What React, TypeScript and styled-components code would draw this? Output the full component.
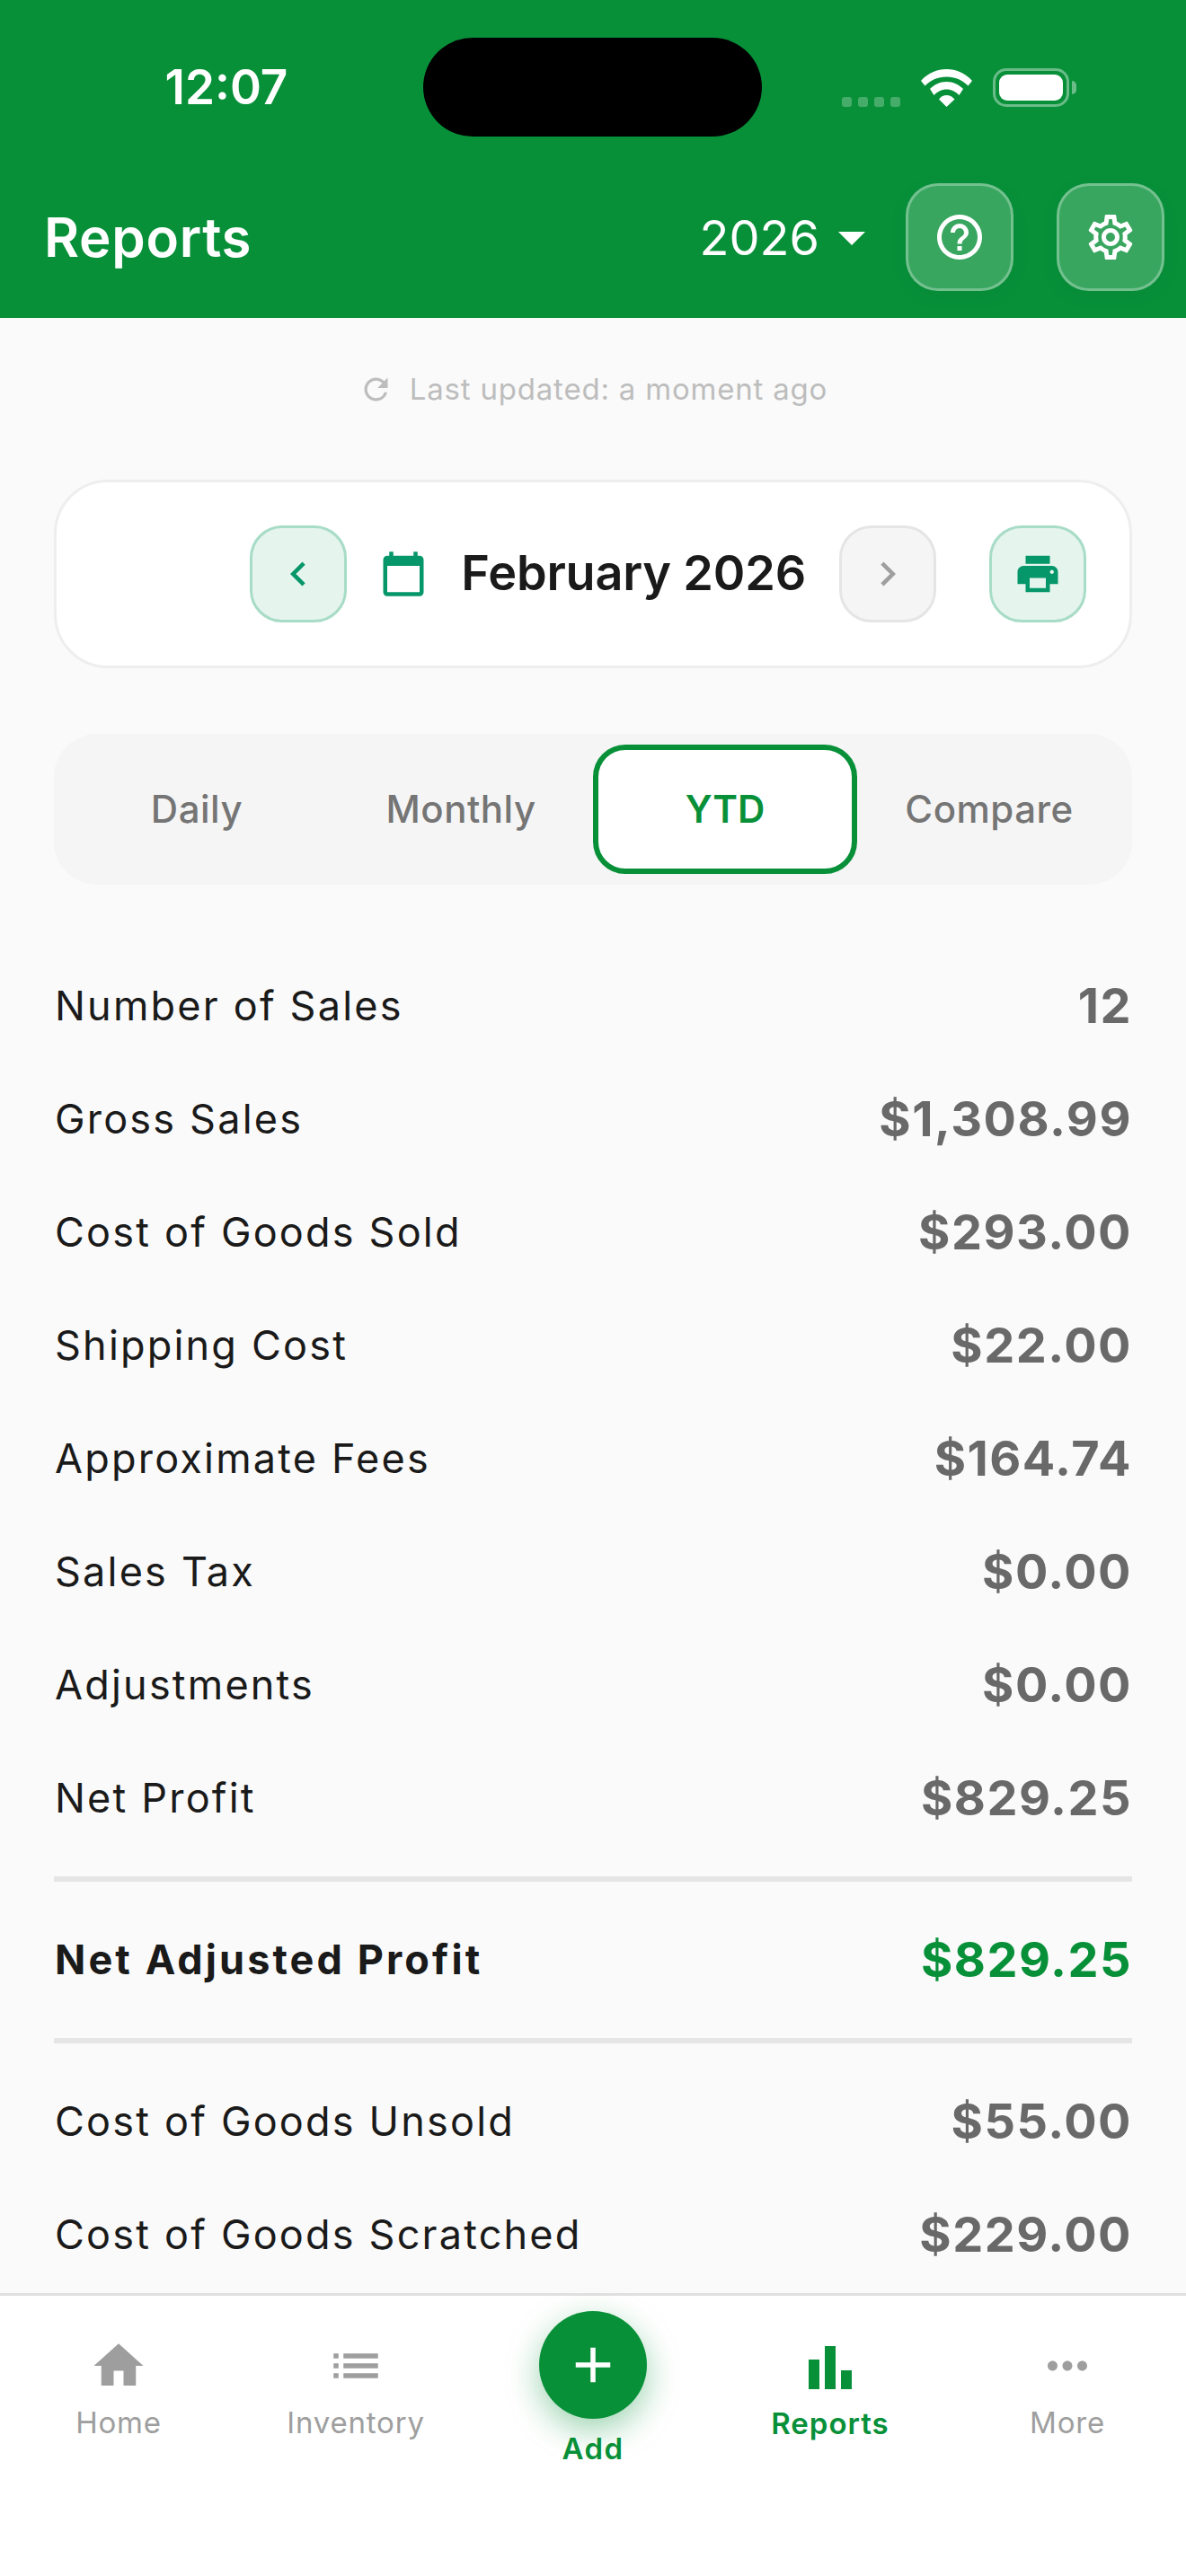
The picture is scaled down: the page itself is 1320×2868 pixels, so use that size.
import { createGlobalStyle, styled } from 'styled-components';
import {
  MdAdd,
  MdArrowDropDown,
  MdBarChart,
  MdCalendarToday,
  MdChevronLeft,
  MdChevronRight,
  MdHelpOutline,
  MdHome,
  MdList,
  MdMoreHoriz,
  MdOutlineSettings,
  MdPrint,
  MdRefresh,
} from 'react-icons/md';

const GREEN = '#089039';
const TEAL = '#059669';

const GlobalStyle = createGlobalStyle`
  html, body {
    margin: 0;
    padding: 0;
    background: #fafafa;
  }
  * {
    box-sizing: border-box;
  }
  body {
    font-family: Inter, "Liberation Sans", sans-serif;
  }
`;

const Screen = styled.div`
  width: 1320px;
  height: 2868px;
  display: flex;
  flex-direction: column;
  overflow: hidden;
  background: #fafafa;
`;

const Header = styled.header`
  background: ${GREEN};
  height: 354px;
  flex: none;
  display: flex;
  flex-direction: column;
`;

const StatusBar = styled.div`
  display: grid;
  grid-template-columns: 471px 377px 1fr;
  align-items: center;
  padding-top: 42px;
`;

const Time = styled.div`
  color: #fff;
  font-size: 53px;
  font-weight: 600;
  text-align: center;
  padding-left: 33px;
`;

const Island = styled.div`
  height: 110px;
  background: #000;
  border-radius: 55px;
`;

const StatusIcons = styled.div`
  display: flex;
  align-items: flex-end;
  height: 43px;
  padding-left: 89px;
`;

const SignalDots = styled.div`
  display: flex;
  gap: 7px;
  margin-right: 23px;
`;

const SignalDot = styled.span`
  width: 11px;
  height: 11px;
  border-radius: 3px;
  background: rgba(255, 255, 255, 0.25);
`;

const Battery = styled.div`
  position: relative;
  width: 85px;
  height: 43px;
  margin-left: 23px;
  padding: 4px;
  border: 3px solid rgba(255, 255, 255, 0.4);
  border-radius: 15px;
`;

const BatteryFill = styled.div`
  height: 100%;
  background: #fff;
  border-radius: 9px;
`;

const BatteryTip = styled.div`
  position: absolute;
  right: -11px;
  top: 11px;
  width: 5px;
  height: 15px;
  background: rgba(255, 255, 255, 0.4);
  border-radius: 0 5px 5px 0;
`;

const TitleRow = styled.div`
  display: flex;
  align-items: center;
  margin-top: 52px;
  padding: 0 24px 0 49px;
`;

const Title = styled.h1`
  flex: 1;
  margin: 0;
  color: #fff;
  font-size: 60px;
  font-weight: 600;
  letter-spacing: 0.7px;
`;

const YearPicker = styled.div`
  display: flex;
  align-items: center;
  color: #fff;
  font-size: 54px;
  font-weight: 400;
  margin-right: 24px;
`;

const HeaderButton = styled.button`
  width: 120px;
  height: 120px;
  padding: 0;
  display: flex;
  align-items: center;
  justify-content: center;
  color: #fff;
  background: rgba(255, 255, 255, 0.2);
  border: 3px solid rgba(255, 255, 255, 0.3);
  border-radius: 36px;
  box-shadow: 0 6px 24px rgba(0, 0, 0, 0.04);

  & + & {
    margin-left: 48px;
  }
`;

const Content = styled.main`
  flex: 1;
  min-height: 0;
  overflow: hidden;
  padding: 0 60px;
`;

const Updated = styled.div`
  display: flex;
  align-items: center;
  justify-content: center;
  gap: 18px;
  height: 158px;
  color: #bdbdbd;
  font-size: 33px;
  letter-spacing: 0.8px;
`;

const DateCard = styled.section`
  height: 210px;
  display: flex;
  align-items: center;
  justify-content: flex-end;
  padding: 0 48px;
  margin-top: 22px;
  background: #fff;
  border: 3px solid #eeeeee;
  border-radius: 60px;
`;

const NavButton = styled.button<{ $active?: boolean }>`
  width: 108px;
  height: 108px;
  padding: 0;
  flex: none;
  display: flex;
  align-items: center;
  justify-content: center;
  color: ${({ $active }) => ($active ? TEAL : '#9e9e9e')};
  background: ${({ $active }) => ($active ? '#e6f4ee' : '#f5f5f5')};
  border: 3px solid ${({ $active }) => ($active ? '#a7dcc6' : '#e5e5e5')};
  border-radius: 36px;
`;

const DateLabel = styled.div`
  display: flex;
  align-items: center;
  gap: 37px;
  margin: 0 37px 0 36px;
  color: #1a1a1a;
  font-size: 54px;
  font-weight: 600;
  letter-spacing: -0.2px;
  line-height: 62px;
  padding-bottom: 2px;
  white-space: nowrap;

  svg {
    color: ${TEAL};
    flex: none;
    margin-top: 2px;
  }
`;

const PrintSpacer = styled.div`
  width: 59px;
  flex: none;
`;

const Tabs = styled.div`
  height: 168px;
  display: grid;
  grid-template-columns: repeat(4, 1fr);
  padding: 12px;
  margin-top: 73px;
  background: #f5f5f5;
  border-radius: 48px;
`;

const Tab = styled.div<{ $selected?: boolean }>`
  display: flex;
  align-items: center;
  justify-content: center;
  padding-bottom: 2px;
  color: ${({ $selected }) => ($selected ? GREEN : '#757575')};
  font-size: 42px;
  font-weight: ${({ $selected }) => ($selected ? 600 : 500)};
  letter-spacing: ${({ $selected }) => ($selected ? 0 : 0.5)}px;
  background: ${({ $selected }) => ($selected ? '#fff' : 'transparent')};
  border: 6px solid ${({ $selected }) => ($selected ? GREEN : 'transparent')};
  border-radius: 36px;
`;

const Rows = styled.div`
  margin-top: 72px;
`;

const Row = styled.div`
  height: 126px;
  display: flex;
  align-items: center;
  justify-content: space-between;
  padding-bottom: 2px;
`;

const RowLabel = styled.span<{ $strong?: boolean }>`
  margin-left: 1px;
  color: #1a1a1a;
  font-size: 45px;
  font-weight: ${({ $strong }) => ($strong ? 700 : 400)};
  letter-spacing: ${({ $strong }) => ($strong ? 3.1 : 2.2)}px;
`;

const RowValue = styled.span<{ $green?: boolean }>`
  color: ${({ $green }) => ($green ? GREEN : '#696969')};
  font-size: 54px;
  font-weight: 700;
  letter-spacing: 1.5px;
`;

const Divider = styled.hr`
  height: 6px;
  margin: 24px 0;
  border: 0;
  background: #e5e5e5;
`;

const NetRow = styled(Row)`
  height: 150px;
  margin: -12px 0;
`;

const BottomNav = styled.nav`
  flex: none;
  height: 315px;
  display: grid;
  grid-template-columns: repeat(5, 1fr);
  background: #fff;
  border-top: 3px solid #e0e0e0;
`;

const NavItem = styled.div<{ $active?: boolean }>`
  display: flex;
  flex-direction: column;
  align-items: center;
  padding-top: ${({ $active }) => ($active ? 44 : 45)}px;
  color: ${({ $active }) => ($active ? GREEN : '#9e9e9e')};
  font-size: 33px;
  font-weight: ${({ $active }) => ($active ? 600 : 400)};
  letter-spacing: ${({ $active }) => ($active ? 1 : 0.8)}px;

  svg {
    flex: none;
  }
`;

const NavText = styled.span<{ $active?: boolean }>`
  margin-top: ${({ $active }) => ($active ? 6 : 10)}px;
`;

const AddItem = styled.div`
  display: flex;
  flex-direction: column;
  align-items: center;
  padding-top: 17px;
  color: ${GREEN};
  font-size: 33px;
  font-weight: 600;
  letter-spacing: 1.5px;
`;

const AddCircle = styled.div`
  width: 120px;
  height: 120px;
  flex: none;
  display: flex;
  align-items: center;
  justify-content: center;
  color: #fff;
  background: ${GREEN};
  border-radius: 50%;
  box-shadow: 0 12px 36px rgba(8, 144, 57, 0.4);
`;

const AddText = styled.span`
  margin-top: 13px;
`;

const WifiIcon = () => (
  <svg width="57" height="42" viewBox="0 0 57 42" fill="#fff">
    <path d="M0 13C8 4 18 0 28.5 0S49 4 57 13L52.5 18.500C46 12 38 8.500 28.500 8.500S11 12 4.500 18.500Z" />
    <path d="M10 22C15 17 21 14 28.500 14S42 17 47 22L42.500 29C38.500 25 34 22.500 28.500 22.500S18.500 25 14.500 29Z" />
    <path d="M20 33.500C22 31 25 29 28.500 29S35 31 37.500 33.500L28.500 42Z" />
  </svg>
);

const topRows = [
  ['Number of Sales', '12'],
  ['Gross Sales', '$1,308.99'],
  ['Cost of Goods Sold', '$293.00'],
  ['Shipping Cost', '$22.00'],
  ['Approximate Fees', '$164.74'],
  ['Sales Tax', '$0.00'],
  ['Adjustments', '$0.00'],
  ['Net Profit', '$829.25'],
];

const bottomRows = [
  ['Cost of Goods Unsold', '$55.00'],
  ['Cost of Goods Scratched', '$229.00'],
];

const tabs = ['Daily', 'Monthly', 'YTD', 'Compare'];

export default function App() {
  return (
    <Screen>
      <GlobalStyle />
      <Header>
        <StatusBar>
          <Time>12:07</Time>
          <Island />
          <StatusIcons>
            <SignalDots>
              <SignalDot />
              <SignalDot />
              <SignalDot />
              <SignalDot />
            </SignalDots>
            <WifiIcon />
            <Battery>
              <BatteryFill />
              <BatteryTip />
            </Battery>
          </StatusIcons>
        </StatusBar>
        <TitleRow>
          <Title>Reports</Title>
          <YearPicker>
            2026
            <MdArrowDropDown size={72} />
          </YearPicker>
          <HeaderButton>
            <MdHelpOutline size={60} />
          </HeaderButton>
          <HeaderButton>
            <MdOutlineSettings size={60} />
          </HeaderButton>
        </TitleRow>
      </Header>
      <Content>
        <Updated>
          <MdRefresh size={39} />
          <span>Last updated: a moment ago</span>
        </Updated>
        <DateCard>
          <NavButton $active>
            <MdChevronLeft size={54} />
          </NavButton>
          <DateLabel>
            <MdCalendarToday size={54} />
            February 2026
          </DateLabel>
          <NavButton>
            <MdChevronRight size={54} />
          </NavButton>
          <PrintSpacer />
          <NavButton $active>
            <MdPrint size={54} />
          </NavButton>
        </DateCard>
        <Tabs>
          {tabs.map((t) => (
            <Tab key={t} $selected={t === 'YTD'}>
              {t}
            </Tab>
          ))}
        </Tabs>
        <Rows>
          {topRows.map(([label, value]) => (
            <Row key={label}>
              <RowLabel>{label}</RowLabel>
              <RowValue>{value}</RowValue>
            </Row>
          ))}
          <Divider />
          <NetRow>
            <RowLabel $strong>Net Adjusted Profit</RowLabel>
            <RowValue $green>$829.25</RowValue>
          </NetRow>
          <Divider />
          {bottomRows.map(([label, value]) => (
            <Row key={label}>
              <RowLabel>{label}</RowLabel>
              <RowValue>{value}</RowValue>
            </Row>
          ))}
        </Rows>
      </Content>
      <BottomNav>
        <NavItem>
          <MdHome size={66} />
          <NavText>Home</NavText>
        </NavItem>
        <NavItem>
          <MdList size={66} />
          <NavText>Inventory</NavText>
        </NavItem>
        <AddItem>
          <AddCircle>
            <MdAdd size={66} />
          </AddCircle>
          <AddText>Add</AddText>
        </AddItem>
        <NavItem $active>
          <MdBarChart size={72} />
          <NavText $active>Reports</NavText>
        </NavItem>
        <NavItem>
          <MdMoreHoriz size={66} />
          <NavText>More</NavText>
        </NavItem>
      </BottomNav>
    </Screen>
  );
}
